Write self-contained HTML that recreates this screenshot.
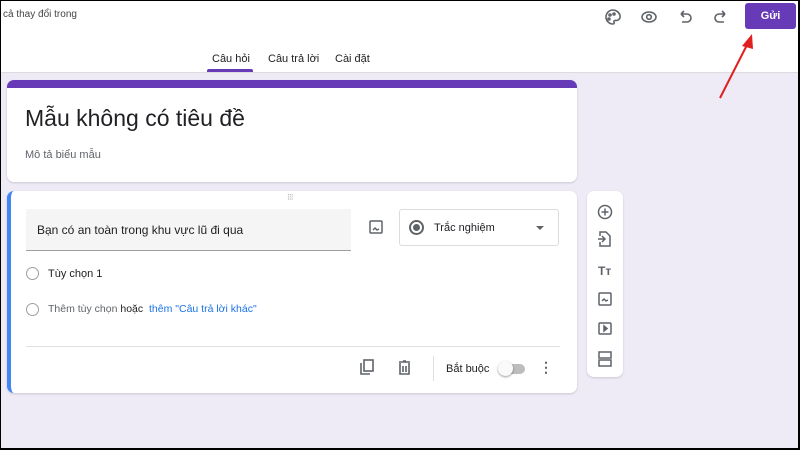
<!DOCTYPE html><html><head><meta charset="utf-8"><style>
body{margin:0;width:800px;height:450px;overflow:hidden;font-family:"Liberation Sans",sans-serif;background:#000}
#f{position:absolute;left:1px;top:1px;width:797px;height:447px;background:#eeeaf6;overflow:hidden}
.abs{position:absolute}
.card{position:absolute;background:#fff;border-radius:7px;box-shadow:0 1px 2px rgba(0,0,0,.15)}
.t{position:absolute;white-space:nowrap;color:#202124}
</style></head><body><div id="f">
<div class="abs" style="left:0;top:0;width:797px;height:71px;background:#fff;border-bottom:1px solid #dadce0"></div>
<div class="t" style="left:2px;top:8px;font-size:10px;color:#444">cả thay đổi trong</div>
<svg class="abs" style="left:600px;top:6px" width="130" height="20" fill="none" stroke="#5f6368" stroke-width="1.6">
<path d="M12 3a7 7 0 1 0 0 14c1 0 1.5-.8 1-1.6-.6-1 .2-2 1.2-2H16a4 4 0 0 0 3-5C18 5 15 3 12 3z"/><circle cx="9" cy="8" r="1"/><circle cx="13" cy="7" r="1"/><circle cx="8" cy="12" r="1"/>
<ellipse cx="48" cy="10" rx="7" ry="5"/><circle cx="48" cy="10" r="2.3"/>
<path d="M80 7h6a4 4 0 0 1 0 8h-5M80 7l3-3M80 7l3 3"/>
<path d="M124 7h-6a4 4 0 0 0 0 8h5M124 7l-3-3M124 7l-3 3"/>
</svg>
<div class="abs" style="left:744px;top:2px;width:51px;height:26px;background:#673ab7;border-radius:3px;color:#fff;font-size:11px;font-weight:bold;text-align:center;line-height:26px">Gửi</div>
<div class="t" style="left:211px;top:52px;font-size:11px">Câu hỏi</div>
<div class="t" style="left:267px;top:52px;font-size:11px">Câu trả lời</div>
<div class="t" style="left:334px;top:52px;font-size:11px">Cài đặt</div>
<div class="abs" style="left:206px;top:68px;width:46px;height:3px;background:#673ab7;border-radius:2px 2px 0 0"></div>
<svg class="abs" style="left:0;top:0" width="797" height="447"><line x1="719" y1="97" x2="748" y2="40" stroke="#e02020" stroke-width="2"/><polygon points="751,33 741,45 752,48" fill="#e02020"/></svg>
<div class="card" style="left:6px;top:79px;width:570px;height:102px;overflow:hidden"><div style="height:8px;background:#673ab7"></div>
<div class="t" style="left:18px;top:25px;font-size:23px">Mẫu không có tiêu đề</div>
<div class="t" style="left:18px;top:69px;font-size:11px;color:#5f6368">Mô tả biểu mẫu</div></div>
<div class="card" style="left:6px;top:190px;height:202px;overflow:hidden;border-left:4px solid #4285f4;width:566px">
<div class="t" style="left:276px;top:1px;font-size:9px;color:#aaa;letter-spacing:-1px">⁝⁝⁝</div>
<div class="abs" style="left:15px;top:18px;width:325px;height:41px;background:#f5f5f5;border-bottom:1px solid #9e9e9e"></div>
<div class="t" style="left:26px;top:32px;font-size:12px">Bạn có an toàn trong khu vực lũ đi qua</div>
<svg class="abs" style="left:358px;top:29px" width="14" height="14" fill="none" stroke="#5f6368" stroke-width="1.5"><rect x="1" y="1" width="12" height="12" rx="1"/><path d="M4 10l2-2 2 2 2-1" /></svg>
<div class="abs" style="left:388px;top:18px;width:158px;height:35px;border:1px solid #dadce0;border-radius:3px"></div>
<div class="abs" style="left:398px;top:29px;width:11px;height:11px;border:2px solid #5f6368;border-radius:50%"></div>
<div class="abs" style="left:402px;top:33px;width:7px;height:7px;background:#5f6368;border-radius:50%"></div>
<div class="t" style="left:423px;top:31px;font-size:11px">Trắc nghiệm</div>
<div class="abs" style="left:525px;top:35px;border:4px solid transparent;border-top:4px solid #5f6368"></div>
<div class="abs" style="left:15px;top:76px;width:11px;height:11px;border:1.5px solid #9e9e9e;border-radius:50%"></div>
<div class="t" style="left:37px;top:77px;font-size:11px">Tùy chọn 1</div>
<div class="abs" style="left:15px;top:112px;width:11px;height:11px;border:1.5px solid #9e9e9e;border-radius:50%"></div>
<div class="t" style="left:37px;top:112px;font-size:10.5px;color:#5f6368">Thêm tùy chọn <span style="color:#202124">hoặc</span> &nbsp;<span style="color:#1a73e8">thêm "Câu trả lời khác"</span></div>
<div class="abs" style="left:15px;top:155px;width:534px;height:1px;background:#e0e0e0"></div>
<svg class="abs" style="left:348px;top:167px" width="60" height="18" fill="none" stroke="#5f6368" stroke-width="1.6"><rect x="5" y="2" width="9" height="11"/><path d="M2 5v11h9"/><path d="M40 4h11M44 3h3M41 5v11h9V5M44 8v6M47 8v6"/></svg>
<div class="abs" style="left:422px;top:165px;width:1px;height:25px;background:#e0e0e0"></div>
<div class="t" style="left:435px;top:172px;font-size:11px">Bắt buộc</div>
<div class="abs" style="left:490px;top:173px;width:24px;height:10px;background:#bdbdbd;border-radius:5px"></div>
<div class="abs" style="left:487px;top:170px;width:15px;height:15px;background:#fafafa;border-radius:50%;box-shadow:0 1px 2px rgba(0,0,0,.4)"></div>
<div class="t" style="left:528px;top:168px;font-size:14px;font-weight:bold;color:#5f6368">⋮</div>
</div>
<div class="card" style="left:586px;top:190px;width:36px;height:186px">
<svg class="abs" style="left:9px;top:12px" width="18" height="165" fill="none" stroke="#5f6368" stroke-width="1.5">
<circle cx="9" cy="9" r="6.5"/><path d="M9 5.5v7M5.5 9h7"/>
<path d="M4 33v-4h6l4 4v10H4v-4M2 36h7M6 33l3 3-3 3"/>
<text x="2" y="72" font-size="12" font-weight="bold" fill="#5f6368" stroke="none" font-family="Liberation Sans">Tт</text>
<rect x="3" y="90" width="12" height="12" rx="1"/><path d="M6 98l2-2 2 2 2-1"/>
<rect x="3" y="120" width="12" height="11" rx="1"/><path d="M8 123v5l3-2.5z" fill="#5f6368"/>
<rect x="3" y="149" width="12" height="6"/><rect x="3" y="157" width="12" height="6"/>
</svg></div>
</div></body></html>
